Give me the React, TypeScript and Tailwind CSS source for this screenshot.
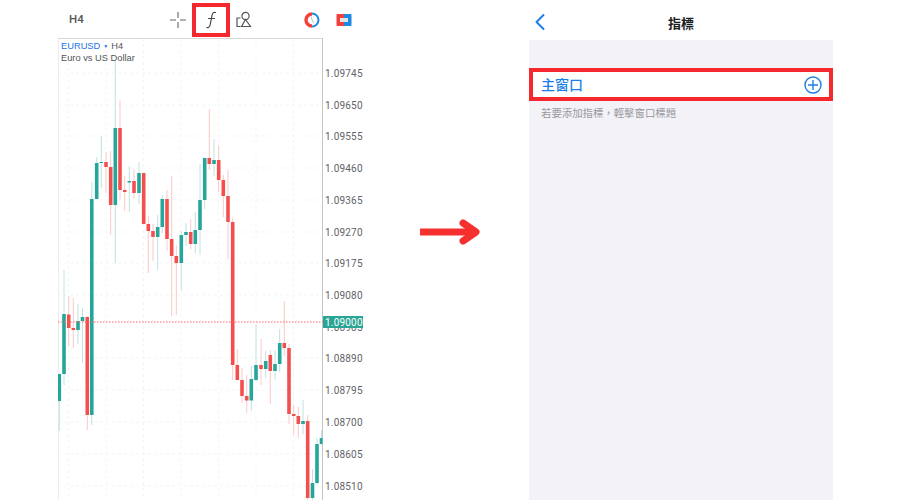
const G = "#26a69a";
const R = "#f44f4f";
// x, wickTop, wickBottom, bodyTop, bodyBottom, green?
const candles: [number, number, number, number, number, number][] = [
  [59.3,373,431,374,401,1],[64,270,385,314,374,1],[68.7,296,346,314.5,328,0],[73.3,298,348,328,330,0],
  [78,304,344,321,330,1],[82.5,308,363,317,321,1],[87.3,316,430,317,415,0],[91.8,182,425,199,415,1],
  [96.7,157,199,163,199,1],[101.3,136,188,162,163,1],[106,152,193,162,167,0],[110.7,151,235,167,205,0],
  [115.3,60,263,128,205,1],[120,100,199,128,190,0],[124.7,176,211,190,192,0],[129.3,166,212,181,182.5,1],
  [134,169,199,181,193,0],[139,162,204,173,193,1],[143.7,173,224,173,224,0],[148.3,216,273,224,231,0],
  [153,224,261,231,237,0],[157.7,215,270,227,237,1],[162.3,195,233,199,227,1],[167,190,251,199,239,0],
  [171.7,176,316,239,256,0],[176.3,245,315,256,263,0],[181.3,231,290,235,263,1],[186,223,246,232,235,1],
  [190.7,219,249,232,244,0],[195.3,212,253,230,244,1],[200,164,255,200,230,1],[204.7,157,209,158,200,1],
  [209.3,109,170,158,164,0],[214,139,176,160,164,1],[218.7,145,192,160,180,0],[223.3,175,217,180,196,0],
  [228,170,259,196,222,0],[232.7,218,380,222,365,0],[237.3,349,380,365,380,0],[242,368,403,380,396,0],
  [246.7,375,413,396,400.5,0],[251.3,366,411,379,400.5,1],[256,324,381,365,380,1],[261,339,385,365,369,0],
  [265.7,351,378,361,369,1],[270.3,350,404,355,371,0],[275,350,380,364,371,1],[279.7,329,372,343,364,1],
  [284.3,301,356,343,348,0],[289,344,424,348,414,0],[293.7,405,435,414,416,0],[298.3,407,438,416,424,0],
  [303,400,434,421,424,1],[307.7,415,500,421,498,0],[312.5,469,500,483,498,1],[317,438,485,444,483,1],
  [321.5,430,445,438,444,1],
];
const prices: [string, number][] = [
  ["1.09745",73],["1.09650",105],["1.09555",136],["1.09460",168],["1.09365",200],["1.09270",232],["1.09175",263],
  ["1.09080",295],["1.08985",327],["1.08890",358],["1.08795",390],["1.08700",422],["1.08605",454],["1.08510",486],
];
const hGrid = [73,105,136,168,200,232,263,295,327,358,390,422,454,486];
const vGrid = [68.5,106,143.5,181,218.5,256,293.5];
const ox = 58, oy = 38;

function Chart() {
  return (
    <svg width="305" height="462" viewBox={`${ox} ${oy} 305 462`} className="block" style={{ fontFamily: "Roboto, sans-serif" }}>
      <defs>
        <clipPath id="plot"><rect x="58" y="38" width="264.5" height="462" /></clipPath>
      </defs>
      {hGrid.map((y) => <line key={y} x1="58" x2="322" y1={y} y2={y} stroke="#f3f5f5" strokeDasharray="3 3" />)}
      {vGrid.map((x) => <line key={x} x1={x} x2={x} y1="38" y2="500" stroke="#f3f5f5" strokeDasharray="3 3" />)}
      <line x1="58.5" x2="58.5" y1="38" y2="500" stroke="#ececec" />
      <line x1="58" x2="323" y1="38.5" y2="38.5" stroke="#d9d9d9" />
      <line x1="322.5" x2="322.5" y1="38" y2="500" stroke="#c4c4c4" />
      <g clipPath="url(#plot)">
        {candles.map(([x, wt, wb, bt, bb, g]) => (
          <g key={x}>
            <line x1={x} x2={x} y1={wt} y2={wb} stroke={g ? "#bfe3e0" : "#fcc9c9"} strokeWidth="1" />
            <rect x={x - 1.8} y={bt} width="3.6" height={Math.max(bb - bt, 1)} fill={g ? G : R} />
          </g>
        ))}
      </g>
      <line x1="58" x2="323" y1="322" y2="322" stroke="#f66" strokeDasharray="1.5 1.5" />
      {prices.map(([p, y]) => (
        <text key={p} x="325" y={y + 3.5} fontSize="10" letterSpacing="0.2" fill="#5f6368">{p}</text>
      ))}
      <rect x="323" y="316" width="40" height="12" fill="#2aa595" />
      <text x="325" y="325.5" fontSize="10" letterSpacing="0.2" fill="#ffffff">1.09000</text>
    </svg>
  );
}

function Toolbar() {
  return (
    <div className="h-[38px] flex items-center">
      <span className="w-[111px] pl-[11px] mt-[2px] text-[11.5px] font-medium text-[#555]" style={{ fontFamily: "Roboto, sans-serif" }}>H4</span>
      <svg width="18" height="18" viewBox="0 0 18 18" className="mt-px" fill="none" stroke="#666" strokeWidth="1.1">
        <path d="M1 9h6M11 9h6M9 1v6M9 11v6" />
      </svg>
      <div className="ml-[5px] w-[38px] h-[34px] border-[4px] border-[#f5282d] flex items-center justify-center mt-px">
        <svg width="14" height="18" viewBox="0 0 14 18" fill="none" stroke="#444" strokeWidth="1.2" strokeLinecap="round">
          <path d="M11.5 1.5 C9.5 1 8.5 2 8 4.5 L6.2 13.5 C5.8 16 4.5 17 2.8 16.5" />
          <path d="M4.5 7.5 H10.5" />
        </svg>
      </div>
      <svg width="17" height="18" viewBox="0 0 17 18" className="ml-[6px] mt-px" fill="none" stroke="#555" strokeWidth="1.2">
        <circle cx="9.5" cy="5" r="3.6" />
        <path d="M9.5 8.5 L5.5 15.5 H14.5 Z" />
        <path d="M4.5 7 H1 V15.5 H4.5" />
      </svg>
      <div className="ml-auto mr-[11px] mt-px flex items-center gap-[16px]">
        <svg width="16" height="16" viewBox="0 0 16 16" fill="none">
          <path d="M8 2 A6 6 0 0 0 8 14" stroke="#f0413c" strokeWidth="3.4" />
          <path d="M8 1.5 A6.5 6.5 0 0 1 8 14.5" stroke="#1e88e5" strokeWidth="2" />
          <path d="M7.2 4.5 L8 8 L9.8 11" stroke="#b9c4cc" strokeWidth="1" />
        </svg>
        <svg width="16" height="14" viewBox="0 0 16 14">
          <path d="M1.5 1 H8 V13 H1.5 Q0.5 13 0.5 12 V2 Q0.5 1 1.5 1 Z" fill="#f0413c" />
          <path d="M8 1 H14.5 Q15.5 1 15.5 2 V12 Q15.5 13 14.5 13 H8 Z" fill="#1e88e5" />
          <rect x="4" y="5" width="8" height="4" fill="#dfe6ea" />
        </svg>
      </div>
    </div>
  );
}

export default function App() {
  return (
    <div className="w-[900px] h-[500px] bg-white overflow-hidden flex" style={{ fontFamily: "'Liberation Sans', sans-serif" }}>
      <div className="ml-[58px] w-[305px] shrink-0">
        <Toolbar />
        <div className="relative">
          <Chart />
          <div className="absolute left-[3px] top-[2px] text-[9.3px] leading-[12px] text-[#555]">
            <div><span className="text-[#1a73e8]">EURUSD</span><span className="text-[#1a73e8] text-[5px] align-[1px] mx-[3px]">▼</span>H4</div>
            <div>Euro vs US Dollar</div>
          </div>
        </div>
      </div>
      <div className="w-[166px] shrink-0 flex items-center">
        <svg width="62" height="26" viewBox="0 0 62 26" className="ml-[57px] mt-[-36px]" fill="none" stroke="#f5302e" strokeWidth="7">
          <path d="M0 13 H54" />
          <path d="M43 4 L56 13 L43 22" strokeLinecap="round" strokeLinejoin="round" />
        </svg>
      </div>
      <div className="w-[304px] shrink-0 flex flex-col" style={{ fontFamily: "'Noto Sans CJK TC', sans-serif" }}>
        <div className="h-[40px] relative flex items-center justify-center">
          <svg width="12" height="18" viewBox="0 0 12 18" className="absolute left-[5px] top-[13px]" fill="none" stroke="#1a7fe8" strokeWidth="2" strokeLinecap="round" strokeLinejoin="round">
            <path d="M9.5 2 L2.5 9 L9.5 16" />
          </svg>
          <span className="text-[13px] font-bold text-[#1c1c1e] mt-[5px]">指標</span>
        </div>
        <div className="flex-1 bg-[#f2f2f7] pt-[28px]">
          <div className="h-[33px] bg-white border-[4px] border-[#f5282d] flex items-center justify-between pl-[8px] pr-[7px]">
            <span className="text-[14px] leading-[20px] mt-[-2px] font-medium text-[#1a7fe8]">主窗口</span>
            <svg width="18" height="18" viewBox="0 0 18 18" fill="none" stroke="#1a7fe8" strokeWidth="1.4">
              <circle cx="9" cy="9" r="8" />
              <path d="M9 4 V14 M4 9 H14" />
            </svg>
          </div>
          <p className="pl-[12px] mt-[4px] text-[10.4px] leading-[16px] text-[#98989d]">若要添加指標，輕擊窗口標題</p>
        </div>
      </div>
    </div>
  );
}
